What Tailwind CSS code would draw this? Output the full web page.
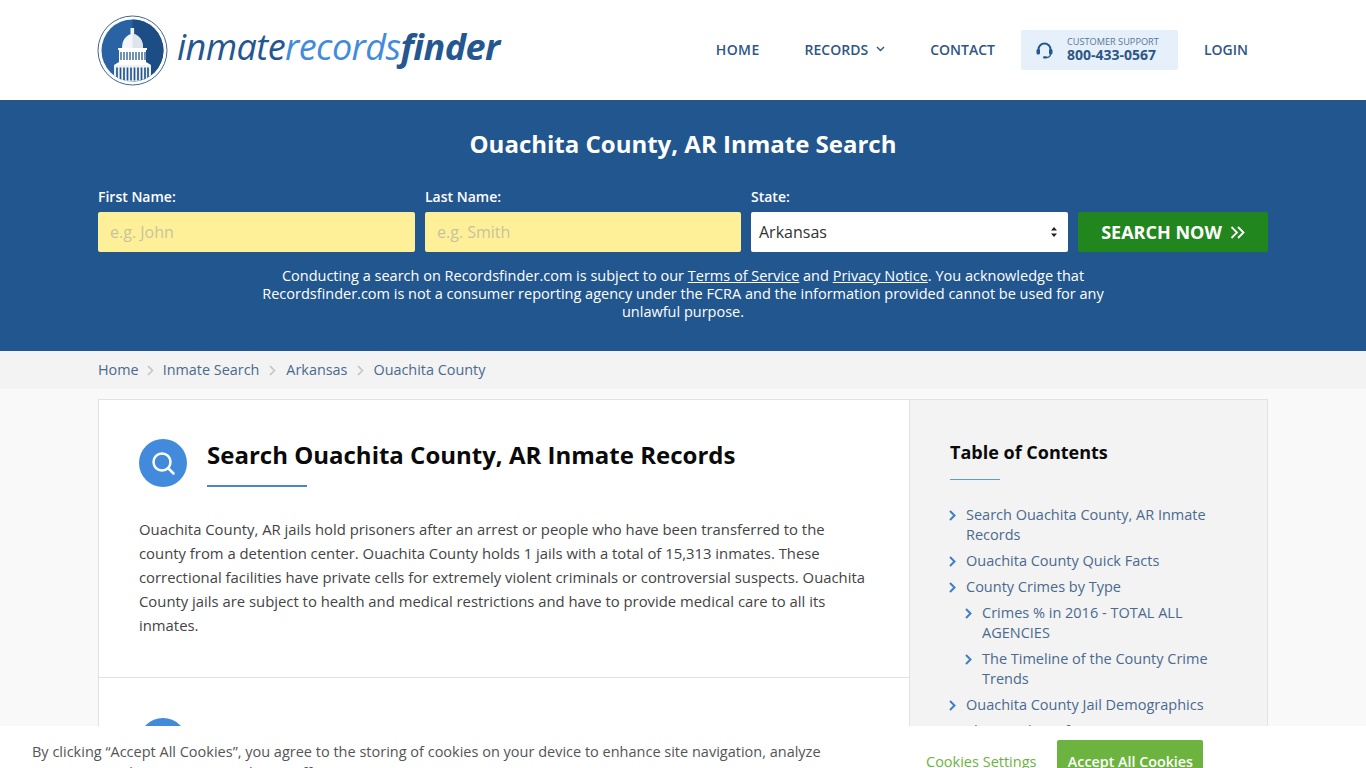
<!DOCTYPE html>
<html lang="en">
<head>
  <meta charset="UTF-8">
  <meta name="viewport" content="width=device-width, initial-scale=1.0">
  <title>Ouachita County, AR Inmate Search</title>
  <script src="https://cdn.jsdelivr.net/npm/@tailwindcss/browser@4"></script>
</head>
<body class="bg-[#f9f9f9] font-['Open_Sans',sans-serif] text-[#444] h-[768px] overflow-hidden">

  <!-- Header -->
  <header class="bg-white h-[100px]">
    <div class="w-[1170px] mx-auto h-full flex items-center justify-between">
      <a href="#" class="flex items-center gap-[9px] -ml-px">
        <svg width="71" height="71" viewBox="0 0 71 71">
          <defs>
            <clipPath id="disc"><circle cx="35.5" cy="35.5" r="31"/></clipPath>
          </defs>
          <circle cx="35.5" cy="35.5" r="34.5" fill="#fff" stroke="#3f6597" stroke-width="1"/>
          <circle cx="35.5" cy="35.5" r="31" fill="#2a63a3"/>
          <path d="M35.5 4.500a31 31 0 0 1 0 62z" fill="#1d4d85"/>
          <g clip-path="url(#disc)">
            <rect x="33.500" y="13" width="3.600" height="6" fill="#eef1f6"/>
            <path d="M25 33c0-8 4-13 10.500-14.500C42 20 46 25 46 33z" fill="#f4f6f9"/>
            <path d="M35.500 18.500C42 20 46 25 46 33H35.500z" fill="#dfe4ec"/>
            <rect x="21" y="33" width="29" height="2" fill="#fff"/>
            <rect x="22" y="35" width="27" height="12" fill="#fff"/>
            <path d="M24 37v8M27 37v8M30 37v8M33 37v8M36 37v8M39 37v8M42 37v8M45 37v8M48 37v8" stroke="#24578f" stroke-width="1.300"/>
            <path d="M17 50l5-3h27l5 3z" fill="#fff"/>
            <rect x="17" y="50" width="37" height="20" fill="#eef1f6"/>
            <path d="M20 52.500v11M23.500 52.500v12M27 52.500v13M30.500 52.500v13M34 52.500v13M37.500 52.500v13M41 52.500v13M44.500 52.500v13M48 52.500v12M51 52.500v11" stroke="#24578f" stroke-width="1.700"/>
          </g>
        </svg>
        <span class="text-[36px] leading-none italic tracking-[-0.55px] whitespace-nowrap relative top-[-3px]"><span class="text-[#24578f]">inmate</span><span class="text-[#428bdc]">records</span><span class="text-[#24578f] font-bold">finder</span></span>
      </a>
      <nav class="flex items-center text-[14px] font-semibold text-[#2f5685]">
        <a href="#" class="mr-[45px] pb-[2px] tracking-[0.4px]">HOME</a>
        <a href="#" class="flex items-center gap-[8px] mr-[45px] pb-[2px]">RECORDS
          <svg width="9" height="6" viewBox="0 0 9 6" fill="none" stroke="#2f5685" stroke-width="1.400"><path d="M1 1l3.500 3.500L8 1"/></svg>
        </a>
        <a href="#" class="mr-[26px] pb-[2px]">CONTACT</a>
        <a href="#" class="flex items-center w-[157px] h-[40px] pl-[15px] bg-[#e5f0fb] rounded-[2px] mr-[26px]">
          <svg width="17" height="17" viewBox="0 0 17 17" fill="none" class="mr-[14px]">
            <path d="M2.500 9V7.500a6 6 0 0 1 12 0V9" stroke="#24578f" stroke-width="2"/>
            <rect x="0.500" y="7" width="3.500" height="5.500" rx="1.500" fill="#24578f"/>
            <rect x="13" y="7" width="3.500" height="5.500" rx="1.500" fill="#24578f"/>
            <path d="M14.500 12c0 2.500-2 3.500-4.500 3.500" stroke="#24578f" stroke-width="1.300"/>
            <rect x="7" y="14.300" width="4" height="2.200" rx="1.100" fill="#24578f"/>
          </svg>
          <span class="flex flex-col pb-[3px]">
            <span class="text-[9.2px] leading-[12px] font-normal text-[#5b7597]">CUSTOMER SUPPORT</span>
            <span class="text-[14px] leading-[14px] font-bold">800-433-0567</span>
          </span>
        </a>
        <a href="#" class="mr-[20px] pb-[2px]">LOGIN</a>
      </nav>
    </div>
  </header>

  <!-- Search banner -->
  <section class="bg-[#22568f] h-[251px] text-white">
    <div class="w-[1170px] mx-auto">
      <h1 class="pt-[26px] text-[24px] leading-[36px] font-bold text-center">Ouachita County, AR Inmate Search</h1>
      <form class="grid grid-cols-[317px_316px_317px_190px] gap-x-[10px] mt-[25px]">
        <label class="flex flex-col text-[14px] leading-[20px] font-semibold">First Name:
          <input placeholder="e.g. John" class="mt-[5px] h-[40px] px-[12px] rounded-[2px] bg-[#fdf099] text-[16px] font-normal placeholder:text-[#c9c39b]">
        </label>
        <label class="flex flex-col text-[14px] leading-[20px] font-semibold">Last Name:
          <input placeholder="e.g. Smith" class="mt-[5px] h-[40px] px-[12px] rounded-[2px] bg-[#fdf099] text-[16px] font-normal placeholder:text-[#c9c39b]">
        </label>
        <label class="flex flex-col text-[14px] leading-[20px] font-semibold">State:
          <span class="relative mt-[5px] h-[40px] px-[8px] flex items-center rounded-[2px] bg-white text-[16px] font-normal text-[#333]">
            Arkansas
            <svg width="6" height="10" viewBox="0 0 6 10" class="absolute right-[11px] top-[15px]" fill="#222"><path d="M3 0l3 3.500H0zM3 10L0 6.500h6z"/></svg>
          </span>
        </label>
        <button type="button" class="self-end h-[40px] flex items-center justify-center gap-[8px] rounded-[2px] bg-[#22861e] text-[18px] font-bold">SEARCH NOW
          <svg width="15" height="13" viewBox="0 0 15 13" fill="none" stroke="#fff" stroke-width="1.800"><path d="M1.500 1l5.500 5.500L1.500 12M8 1l5.500 5.500L8 12"/></svg>
        </button>
      </form>
      <p class="w-[860px] mx-auto mt-[15px] text-[14.5px] leading-[18px] font-medium text-center">Conducting a search on Recordsfinder.com is subject to our <a href="#" class="underline">Terms of Service</a> and <a href="#" class="underline">Privacy Notice</a>. You acknowledge that Recordsfinder.com is not a consumer reporting agency under the FCRA and the information provided cannot be used for any unlawful purpose.</p>
    </div>
  </section>

  <!-- Breadcrumb -->
  <div class="bg-[#f3f3f3] h-[38px]">
    <div class="w-[1170px] mx-auto h-full flex items-center pb-[1px] text-[14.4px] text-[#4a6a8f]">
      <a href="#">Home</a>
      <svg width="7" height="11" viewBox="0 0 7 11" fill="none" stroke="#c4c4c4" stroke-width="1.600" class="mx-[8.500px] mt-[2px]"><path d="M1 1l4.500 4.500L1 10"/></svg>
      <a href="#">Inmate Search</a>
      <svg width="7" height="11" viewBox="0 0 7 11" fill="none" stroke="#c4c4c4" stroke-width="1.600" class="mx-[10px] mt-[2px]"><path d="M1 1l4.500 4.500L1 10"/></svg>
      <a href="#">Arkansas</a>
      <svg width="7" height="11" viewBox="0 0 7 11" fill="none" stroke="#c4c4c4" stroke-width="1.600" class="mx-[9.500px] mt-[2px]"><path d="M1 1l4.500 4.500L1 10"/></svg>
      <a href="#">Ouachita County</a>
    </div>
  </div>

  <!-- Main content -->
  <main class="w-[1170px] mx-auto mt-[10px] flex items-start">
    <div class="w-[812px] bg-white border border-[#e2e2e2] border-r-0 shrink-0">
      <section class="pt-[39px] px-[40px] pb-[40px] border-b border-[#e2e2e2]">
        <div class="flex gap-[20px]">
          <span class="w-[48px] h-[48px] rounded-full bg-[#428bdc] flex items-center justify-center shrink-0">
            <svg width="26" height="26" viewBox="0 0 26 26" fill="none" stroke="#fff" stroke-width="2.500"><circle cx="12" cy="12" r="8.500"/><path d="M18.500 18.500l5 5" stroke-linecap="round"/></svg>
          </span>
          <div>
            <h2 class="text-[24px] leading-[32px] font-bold text-[#0a0a0a]">Search Ouachita County, AR Inmate Records</h2>
            <div class="w-[100px] h-[2px] bg-[#4a86c0] mt-[14px]"></div>
          </div>
        </div>
        <p class="mt-[30px] text-[14.85px] leading-[24px] text-[#444]">Ouachita County, AR jails hold prisoners after an arrest or people who have been transferred to the county from a detention center. Ouachita County holds 1 jails with a total of 15,313 inmates. These correctional facilities have private cells for extremely violent criminals or controversial suspects. Ouachita County jails are subject to health and medical restrictions and have to provide medical care to all its inmates.</p>
      </section>
      <section class="pt-[40px] px-[40px] pb-[40px]">
        <div class="flex gap-[20px]">
          <span class="w-[48px] h-[48px] rounded-full bg-[#428bdc] shrink-0"></span>
          <h2 class="ml-[6px] mt-[2px] text-[24px] leading-[32px] font-bold text-[#0a0a0a]">Ouachita County Quick Facts</h2>
        </div>
      </section>
    </div>

    <aside class="-ml-px w-[359px] h-[500px] bg-[#f3f3f3] border border-[#e2e2e2] pt-[37px] pl-[40px] pr-[40px]">
      <h3 class="text-[18px] leading-[30px] font-bold text-[#0a0a0a]">Table of Contents</h3>
      <div class="w-[50px] h-px bg-[#5a9bd8] mt-[12px] mb-[25px]"></div>
      <ul class="flex flex-col gap-[6px] text-[14.5px] leading-[20px] text-[#4a6a8f]">
        <li class="flex gap-[10px] -ml-px"><svg width="7" height="11" viewBox="0 0 7 11" fill="none" stroke="#3f7fc4" stroke-width="2" class="mt-[5px] shrink-0"><path d="M1 1l4.500 4.500L1 10"/></svg><a href="#">Search Ouachita County, AR Inmate Records</a></li>
        <li class="flex gap-[10px] -ml-px"><svg width="7" height="11" viewBox="0 0 7 11" fill="none" stroke="#3f7fc4" stroke-width="2" class="mt-[5px] shrink-0"><path d="M1 1l4.500 4.500L1 10"/></svg><a href="#">Ouachita County Quick Facts</a></li>
        <li class="flex gap-[10px] -ml-px"><svg width="7" height="11" viewBox="0 0 7 11" fill="none" stroke="#3f7fc4" stroke-width="2" class="mt-[5px] shrink-0"><path d="M1 1l4.500 4.500L1 10"/></svg><a href="#">County Crimes by Type</a></li>
        <li class="flex gap-[10px] ml-[15px]"><svg width="7" height="11" viewBox="0 0 7 11" fill="none" stroke="#3f7fc4" stroke-width="2" class="mt-[5px] shrink-0"><path d="M1 1l4.500 4.500L1 10"/></svg><a href="#">Crimes % in 2016 - TOTAL ALL AGENCIES</a></li>
        <li class="flex gap-[10px] ml-[15px]"><svg width="7" height="11" viewBox="0 0 7 11" fill="none" stroke="#3f7fc4" stroke-width="2" class="mt-[5px] shrink-0"><path d="M1 1l4.500 4.500L1 10"/></svg><a href="#">The Timeline of the County Crime Trends</a></li>
        <li class="flex gap-[10px] -ml-px"><svg width="7" height="11" viewBox="0 0 7 11" fill="none" stroke="#3f7fc4" stroke-width="2" class="mt-[5px] shrink-0"><path d="M1 1l4.500 4.500L1 10"/></svg><a href="#">Ouachita County Jail Demographics</a></li>
        <li class="flex gap-[10px] -ml-px"><svg width="7" height="11" viewBox="0 0 7 11" fill="none" stroke="#3f7fc4" stroke-width="2" class="mt-[5px] shrink-0"><path d="M1 1l4.500 4.500L1 10"/></svg><a href="#">The Timeline of Inmates Demographics</a></li>
      </ul>
    </aside>
  </main>

  <!-- Cookie banner -->
  <div class="fixed left-0 right-0 bottom-0 h-[42px] bg-white overflow-hidden">
    <div class="flex">
      <p class="w-[790px] ml-[32px] mt-[15px] text-[14.5px] leading-[21px] text-[#555] shrink-0">By clicking “Accept All Cookies”, you agree to the storing of cookies on your device to enhance site navigation, analyze site usage, and assist in our marketing efforts.</p>
      <a href="#" class="ml-[104px] mt-[26px] text-[14.5px] leading-[20px] text-[#6cb33f] whitespace-nowrap">Cookies Settings</a>
      <a href="#" class="ml-[21px] mt-[14px] w-[146px] h-[44px] pt-[12px] text-center rounded-[2px] bg-[#6cb33f] text-white text-[14.3px] leading-[20px] font-semibold whitespace-nowrap">Accept All Cookies</a>
    </div>
  </div>
</body>
</html>
